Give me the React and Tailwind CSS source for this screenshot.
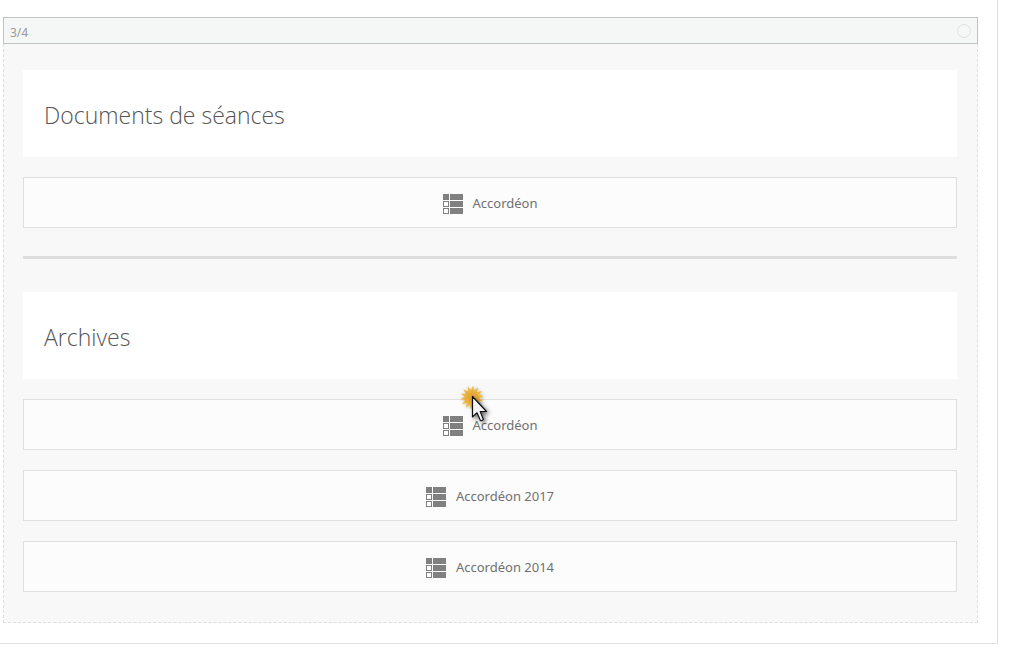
function AccordionIcon() {
  return (
    <svg width="20" height="20" viewBox="0 0 20 20" aria-hidden="true" shapeRendering="crispEdges" className="shrink-0">
      <g fill="#808080">
        <rect width="6" height="6" />
        <rect x="7" width="13" height="6" />
        <rect x="7" y="7" width="13" height="6" />
        <rect x="7" y="14" width="13" height="6" />
      </g>
      <g fill="#ffffff" stroke="#808080">
        <rect x="0.5" y="7.5" width="5" height="5" />
        <rect x="0.5" y="14.5" width="5" height="5" />
      </g>
    </svg>
  );
}

function TitleBlock({ children }) {
  return (
    <div className="flex h-[87px] items-center bg-white px-[21px] pt-0.5">
      <h2 className="font-['Open_Sans',sans-serif] text-[23px] leading-8 font-light text-[#555]">{children}</h2>
    </div>
  );
}

function Module({ label }) {
  return (
    <button type="button" className="flex h-[51px] w-full items-center justify-center gap-2.5 border border-[#dfdfdf] bg-[#fcfcfc] pt-0.5 text-[13px] text-[#707070]">
      <AccordionIcon />
      {label}
    </button>
  );
}

function Pointer() {
  const rays = Array.from({ length: 14 }, (_, i) => {
    const point = (turn, r) => {
      const a = ((i + turn) / 14) * Math.PI * 2 - Math.PI / 2;
      return `${13 + Math.cos(a) * r},${12.5 + Math.sin(a) * r}`;
    };
    return `${point(0.2, 12)} ${point(0.7, 7.5)}`;
  }).join(" ");
  return (
    <svg width="36" height="44" viewBox="0 0 36 44" aria-hidden="true" className="pointer-events-none absolute -top-3.5 left-[calc(50%-31px)]">
      <defs>
        <radialGradient id="burst">
          <stop offset="0" stopColor="#e0a02e" />
          <stop offset="1" stopColor="#f3c04e" />
        </radialGradient>
        <filter id="shade" x="-50%" y="-50%" width="200%" height="200%">
          <feDropShadow dx="2" dy="2" stdDeviation="2" floodColor="#000" floodOpacity="0.6" />
        </filter>
        <filter id="soft" x="-50%" y="-50%" width="200%" height="200%">
          <feDropShadow dx="1" dy="1" stdDeviation="1.5" floodColor="#000" floodOpacity="0.25" />
        </filter>
      </defs>
      <polygon points={rays} fill="url(#burst)" filter="url(#soft)" />
      <path d="M13.5 11.5V32L18 27.8L21.3 35.2Q23 36.2 24.4 34.4L21.2 26.5H27.5Z" fill="#f4f4f4" stroke="#111" strokeWidth="1.2" strokeLinejoin="round" filter="url(#shade)" />
    </svg>
  );
}

export default function App() {
  return (
    <div className="min-h-screen bg-white font-['Noto_Sans',sans-serif]">
      <main className="mr-[18px] border-r border-b border-[#dfdfdf] pt-[17px] pr-[19px] pb-5 pl-[3px]">
        <header className="flex h-[27px] items-center justify-between border border-[#bfc3c1] bg-[#f5f7f6] px-1.5">
          <span className="pt-1 text-[12px] leading-4 text-[#999]">3/4</span>
          <button type="button" aria-label="Sélectionner la colonne" className="size-3.5 rounded-full border border-[#dfe2e0]" />
        </header>
        <section className="border border-t-0 border-dashed border-[#dfdfdf] bg-[#f8f8f8] pt-[26px] pr-5 pb-[30px] pl-[19px]">
          <div className="flex flex-col gap-5">
            <TitleBlock>Documents de séances</TitleBlock>
            <Module label="Accordéon" />
          </div>
          <hr className="mt-7 mb-[33px] border-0 border-t-3 border-[#ddd]" />
          <div className="flex flex-col gap-5">
            <TitleBlock>Archives</TitleBlock>
            <div className="relative">
              <Module label="Accordéon" />
              <Pointer />
            </div>
            <Module label="Accordéon 2017" />
            <Module label="Accordéon 2014" />
          </div>
        </section>
      </main>
    </div>
  );
}
